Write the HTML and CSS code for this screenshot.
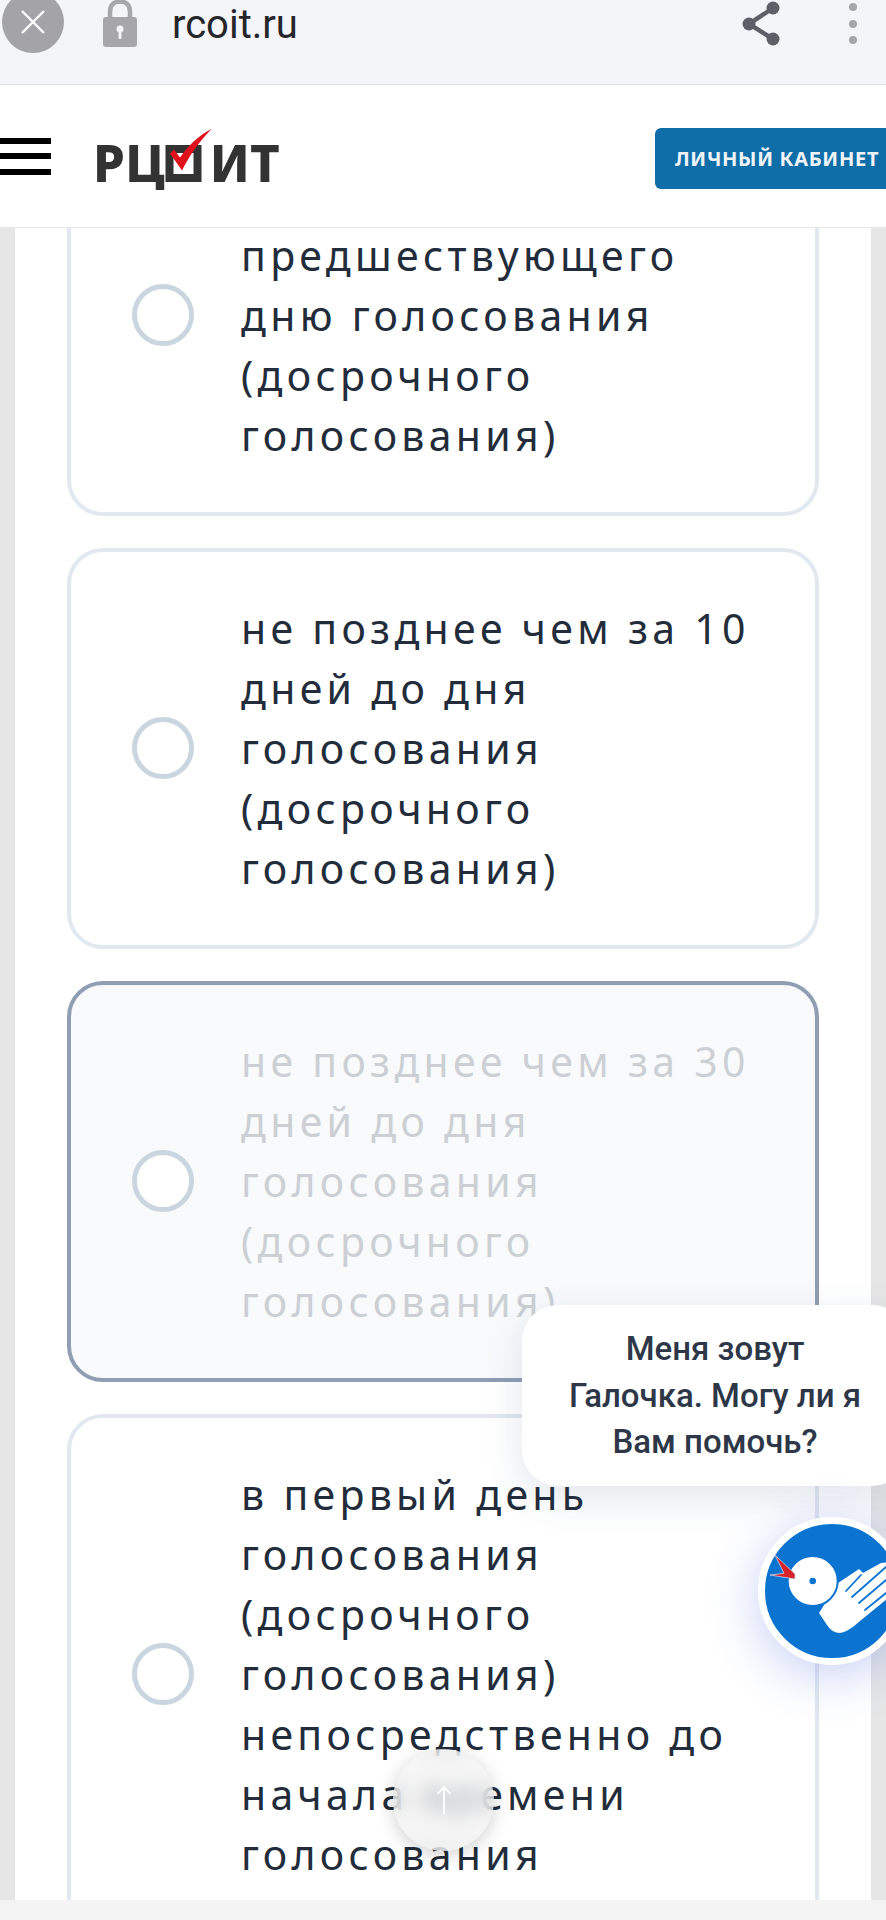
FILE: index.html
```html
<!DOCTYPE html>
<html lang="ru">
<head>
  <meta charset="UTF-8">
  <meta name="viewport" content="width=device-width, initial-scale=1">
  <title>РЦОИТ</title>
  <link rel="stylesheet" href="styles.css">
</head>
<body>

<div class="page">
  <div class="browser-bar">
    <span class="close-btn">
      <svg width="30" height="30" viewBox="0 0 30 30"><path d="M4 4L26 26M26 4L4 26" stroke="#fff" stroke-width="2.4" fill="none"/></svg>
    </span>
    <svg class="lock" width="36" height="48" viewBox="0 0 36 48">
      <path d="M8 22V12C8 5 12 1.500 18 1.500S28 5 28 12V22" stroke="#a6a6ab" stroke-width="4.500" fill="none"/>
      <rect x="1" y="17" width="34" height="30" rx="3" fill="#a6a6ab"/>
      <circle cx="18" cy="29" r="3.500" fill="#f4f5f8"/>
      <rect x="16.500" y="29" width="3" height="10" rx="1" fill="#f4f5f8"/>
    </svg>
    <span class="url">rcoit.ru</span>
    <svg class="share" width="44" height="48" viewBox="0 0 44 48">
      <path d="M32 8L8 24L32 39" stroke="#5f5f68" stroke-width="4.500" fill="none"/>
      <circle cx="32" cy="8" r="6.500" fill="#5f5f68"/>
      <circle cx="8" cy="24" r="6.500" fill="#5f5f68"/>
      <circle cx="32" cy="39" r="6.500" fill="#5f5f68"/>
    </svg>
    <span class="dots"><i></i><i></i><i></i></span>
  </div>

  <header class="site-header">
    <div class="burger"><i></i><i></i><i></i></div>
    <div class="logo">
      <span>РЦ</span>
      <svg class="logo-box" width="45" height="62" viewBox="0 0 45 62">
        <rect x="4.500" y="24" width="28" height="29" fill="none" stroke="#333" stroke-width="8"/>
        <path d="M5 28.500L9 24.500L15 32.500C24 19.500 34 10.500 46.500 4C36 14.500 25 29.500 17 45.500Z" fill="#e0101c"/>
      </svg>
      <span>ИТ</span>
    </div>
    <a class="cabinet-btn">ЛИЧНЫЙ КАБИНЕТ</a>
  </header>

  <main class="content">
    <div class="panel">
      <div class="answers">
        <label class="answer">
          <span class="radio"></span>
          <span class="answer-text answer-text-scrolled">предшествующего дню голосования (досрочного голосования)</span>
        </label>
        <label class="answer">
          <span class="radio"></span>
          <span class="answer-text">не позднее чем за 10 дней до дня голосования (досрочного голосования)</span>
        </label>
        <label class="answer answer-active">
          <span class="radio"></span>
          <span class="answer-text">не позднее чем за 30 дней до дня голосования (досрочного голосования)</span>
        </label>
        <label class="answer">
          <span class="radio"></span>
          <span class="answer-text">в первый день голосования (досрочного голосования) непосредственно до начала времени голосования</span>
        </label>
      </div>
    </div>
  </main>

  <div class="bottom-bar"></div>

  <div class="bubble">Меня зовут Галочка. Могу ли я Вам помочь?</div>

  <div class="assistant">
    <svg width="134" height="134" viewBox="7 7 134 134">
      <path d="M80 66L101 52L105 56L123 46L140 44V73L102 104Q90 115 82 116Q74 116 69 108L61 96Z" fill="#fff"/>
      <g stroke="#0b74d1" stroke-width="1.800" stroke-linecap="round">
        <path d="M88 74L103 58"/>
        <path d="M94 80L128 50"/>
        <path d="M101 86L128 63"/>
        <path d="M107 93L128 76"/>
      </g>
      <circle cx="54.700" cy="64" r="25" fill="#fff" stroke="#0b74d1" stroke-width="2"/>
      <circle cx="54.700" cy="64" r="3.300" fill="#0b74d1"/>
      <path d="M17 38L37 57L37 62L12 58L26 56.300Z" fill="#d8232a" stroke="#c9d6ee" stroke-width="0.800"/>
    </svg>
  </div>

  <div class="to-top">
    <svg width="16" height="30" viewBox="0 0 16 30"><path d="M8 29V2M1.500 9L8 2L14.500 9" stroke="#fff" stroke-width="1.800" fill="none"/></svg>
  </div>
</div>

</body>
</html>
```

FILE: styles.css
```css
html, body {
  margin: 0;
  padding: 0;
}

body {
  font-family: 'Noto Sans', sans-serif;
  background-color: #f4f4f4;
  color: #222c3a;
}

.page {
  position: relative;
  width: 886px;
  height: 1920px;
  overflow: hidden;
  display: flex;
  flex-direction: column;
}

/* browser chrome */
.browser-bar {
  flex: none;
  height: 84px;
  background-color: #f4f5f8;
  border-bottom: 1px solid #e2e2e4;
  position: relative;
  display: flex;
  align-items: flex-start;
}

.close-btn {
  flex: none;
  width: 62px;
  height: 62px;
  margin: -9px 0 0 2px;
  border-radius: 50%;
  background-color: #a3a3a8;
  display: flex;
  align-items: center;
  justify-content: center;
}

.lock {
  flex: none;
  margin: 0 0 0 38px;
}

.url {
  font-family: Roboto, sans-serif;
  font-size: 40px;
  line-height: 50px;
  margin-left: 34px;
  color: #26262a;
}

.share {
  flex: none;
  margin: 0 0 0 auto;
}

.dots {
  flex: none;
  width: 10px;
  margin: 3px 27px 0 64px;
  display: flex;
  flex-direction: column;
  gap: 8.500px;
}

.dots i {
  display: block;
  width: 8px;
  height: 8px;
  border-radius: 50%;
  background-color: #a6a6ab;
}

/* site header */
.site-header {
  flex: none;
  height: 142px;
  background-color: #fff;
  border-bottom: 1px solid #e8e8ea;
  position: relative;
  z-index: 2;
  display: flex;
  align-items: center;
}

.burger {
  width: 51px;
  display: flex;
  flex-direction: column;
  gap: 9.500px;
}

.burger i {
  display: block;
  height: 6px;
  background-color: #000;
}

.logo {
  margin: 0 0 0 42px;
  display: flex;
  align-items: flex-end;
  height: 62px;
  font-weight: 800;
  font-size: 51px;
  line-height: 50px;
  color: #333;
}

.logo-box {
  flex: none;
  overflow: visible;
}

.cabinet-btn {
  margin: 4px 0 0 auto;
  width: 231px;
  height: 61px;
  box-sizing: border-box;
  padding: 0 0 0 20px;
  border-radius: 6px 0 0 6px;
  background-color: #0f6da8;
  color: #eef4f8;
  font-size: 20px;
  font-weight: 700;
  letter-spacing: 0.7px;
  line-height: 61px;
  white-space: nowrap;
  overflow: hidden;
}

/* question list */
.content {
  flex: 1;
  min-height: 0;
  overflow: hidden;
  background-color: #e6e6e6;
  padding: 0 15px;
}

.panel {
  background-color: #fff;
  padding: 0 52px;
  min-height: 100%;
}

.answers {
  margin-top: -113px;
  display: flex;
  flex-direction: column;
  gap: 32px;
}

.answer {
  display: flex;
  align-items: center;
  gap: 47px;
  padding: 46px 40px 47px 61px;
  border: 4px solid #e2e8f0;
  border-radius: 36px;
  background-color: #fff;
}

.answer-active {
  border-color: #8f9eb3;
  background-color: #f8fafc;
}

.answer-active .answer-text {
  opacity: 0.2;
}

.radio {
  flex: none;
  width: 62px;
  height: 62px;
  box-sizing: border-box;
  border: 5px solid #cbd5e0;
  border-radius: 50%;
  background-color: #fff;
}

.answer-text {
  font-size: 41px;
  line-height: 60px;
  letter-spacing: 4.300px;
}

/* first line of this answer is scrolled away under the header */
.answer-text-scrolled {
  padding-top: 60px;
}

.bottom-bar {
  flex: none;
  height: 20px;
  background-color: #f4f4f4;
  position: relative;
}

/* floating things */
.bubble {
  position: absolute;
  left: 522px;
  top: 1305px;
  width: 386px;
  height: 181px;
  box-sizing: border-box;
  padding: 21px 40px 0;
  border-radius: 36px;
  background-color: #fff;
  box-shadow: 0 12px 40px rgba(60, 80, 130, 0.14);
  font-family: Roboto, sans-serif;
  font-size: 33px;
  font-weight: 500;
  line-height: 46.500px;
  color: #2d3748;
  text-align: center;
}

.assistant {
  position: absolute;
  left: 758px;
  top: 1517px;
  width: 148px;
  height: 148px;
  box-sizing: border-box;
  border: 7px solid #fff;
  border-radius: 50%;
  background-color: #0b74d1;
  box-shadow: 0 10px 50px rgba(66, 100, 220, 0.3);
  overflow: hidden;
}

.assistant svg {
  display: block;
}

.to-top {
  position: absolute;
  left: 393px;
  top: 1749px;
  width: 101px;
  height: 102px;
  border-radius: 50%;
  background-color: rgba(240, 240, 240, 0.6);
  backdrop-filter: blur(10px);
  box-shadow: 0 4px 18px rgba(0, 0, 0, 0.18);
  display: flex;
  align-items: center;
  justify-content: center;
}
```
